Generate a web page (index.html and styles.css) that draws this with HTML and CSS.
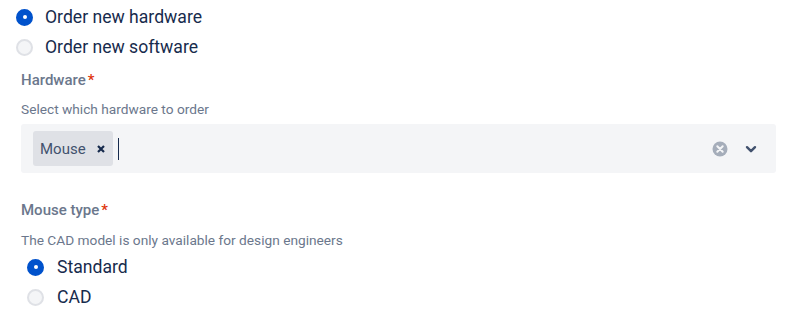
FILE: index.html
```html
<!DOCTYPE html>
<html>
<head>
<meta charset="utf-8">
<link rel="stylesheet" href="styles.css">
</head>
<body>
<div class="page">
  <div class="radios top">
    <label class="radio"><span class="dot checked"></span><span class="rtext">Order new hardware</span></label>
    <label class="radio"><span class="dot"></span><span class="rtext">Order new software</span></label>
  </div>
  <div class="field">
    <div class="label">Hardware<span class="req">*</span></div>
    <div class="desc">Select which hardware to order</div>
    <div class="select">
      <div class="values">
        <span class="chip"><span class="chip-text">Mouse</span>
          <svg class="chip-x" width="8" height="8" viewBox="0 0 8 8"><path d="M1 1L7 7M7 1L1 7" stroke="#172B4D" stroke-width="2.2" stroke-linecap="butt"/></svg>
        </span>
        <span class="caret"></span>
      </div>
      <div class="indicators">
        <svg width="16" height="16" viewBox="0 0 16 16"><circle cx="8" cy="8" r="7.5" fill="#A5ADBA"/><path d="M5.3 5.3L10.7 10.7M10.7 5.3L5.3 10.7" stroke="#F4F5F7" stroke-width="2" stroke-linecap="round"/></svg>
        <svg class="chev" width="14" height="14" viewBox="0 0 14 14"><path d="M3 5.2L7 9.2L11 5.2" fill="none" stroke="#42526E" stroke-width="2.4" stroke-linecap="round" stroke-linejoin="round"/></svg>
      </div>
    </div>
  </div>
  <div class="field second">
    <div class="label">Mouse type<span class="req">*</span></div>
    <div class="desc">The CAD model is only available for design engineers</div>
    <div class="radios inner">
      <label class="radio"><span class="dot checked"></span><span class="rtext">Standard</span></label>
      <label class="radio"><span class="dot"></span><span class="rtext">CAD</span></label>
    </div>
  </div>
</div>
</body>
</html>
```

FILE: styles.css
```css
html, body {
  margin: 0;
  padding: 0;
  background: #ffffff;
}
body {
  font-family: Roboto, "Noto Sans", sans-serif;
  color: #172B4D;
}
.page {
  padding: 2px 30px 0 21px;
  width: 755px;
}
.radios {
  display: flex;
  flex-direction: column;
}
.radios.top {
  margin-left: -5px;
}
.radios.inner {
  margin-left: 6px;
}
.radio {
  display: flex;
  align-items: center;
  height: 30px;
  font-size: 17.6px;
}
.dot {
  box-sizing: border-box;
  width: 17px;
  height: 17px;
  border-radius: 50%;
  border: 2px solid #DFE1E6;
  background: #F4F5F7;
  margin-right: 12px;
  flex: none;
  position: relative;
}
.dot.checked {
  border-color: #0052CC;
  background: #0052CC;
}
.dot.checked::after {
  content: "";
  position: absolute;
  left: 4.5px;
  top: 4.5px;
  width: 4px;
  height: 4px;
  border-radius: 50%;
  background: #fff;
}
.rtext {
  line-height: 20px;
}
.inner .dot {
  margin-right: 13px;
}
.field {
  display: flex;
  flex-direction: column;
}
.field .label {
  margin-top: 10px;
  font-size: 15px;
  font-weight: 500;
  color: #6B778C;
  line-height: 16px;
}
.req {
  color: #DE350B;
  margin-left: 2px;
}
.desc {
  margin-top: 13px;
  font-size: 13.7px;
  color: #6B778C;
  line-height: 16px;
}
.select {
  margin-top: 7px;
  height: 49px;
  background: #F4F5F7;
  border-radius: 3px;
  display: flex;
  align-items: center;
  justify-content: space-between;
  padding: 0 18px 0 12px;
}
.values {
  display: flex;
  align-items: center;
}
.chip {
  display: flex;
  align-items: center;
  height: 35px;
  background: #DFE1E6;
  border-radius: 3px;
  padding: 0 8px 0 7px;
}
.chip-text {
  font-size: 15px;
  color: #42526E;
  margin-right: 11px;
}
.caret {
  width: 1px;
  height: 22px;
  background: #172B4D;
  margin-left: 5px;
}
.indicators {
  display: flex;
  align-items: center;
  gap: 16px;
}
.field.second .label {
  margin-top: 29px;
}
.field.second .desc {
  margin-top: 14px;
}
.field.second .radios {
  margin-top: 4px;
}
```
